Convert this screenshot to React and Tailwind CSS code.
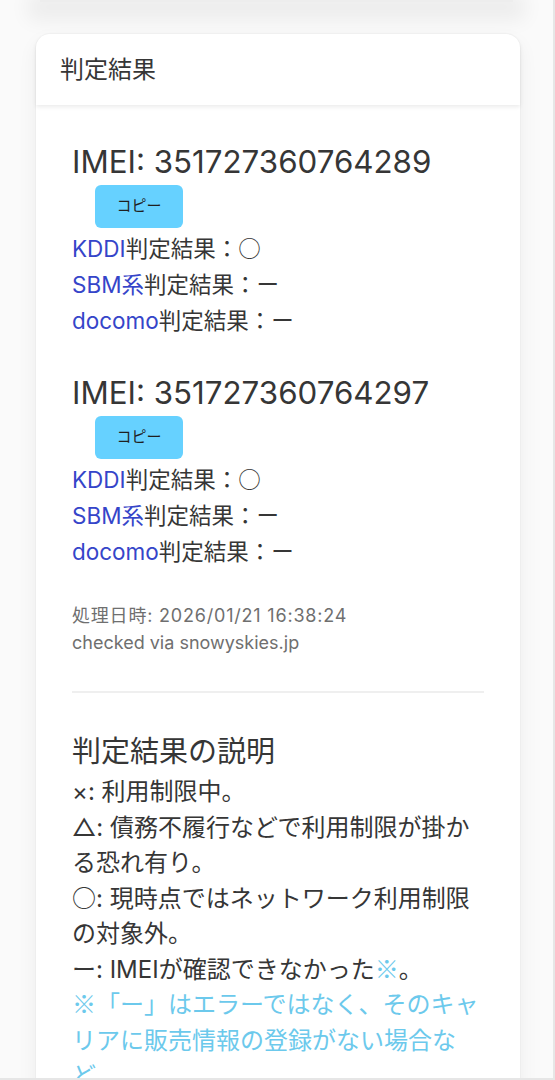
import React from 'react';

const results = [
  { imei: '351727360764289', kddi: '○', sbm: 'ー', docomo: 'ー' },
  { imei: '351727360764297', kddi: '○', sbm: 'ー', docomo: 'ー' },
];

// symbols drawn from the CJK face, kept from growing the line box
const cjk = "font-['Noto_Sans_CJK_JP',sans-serif] leading-none";

function ResultBlock({ r }) {
  return (
    <div>
      <h3 className="text-[31.3px] leading-[44px] text-[#363636]">IMEI: {r.imei}</h3>
      <button className="mt-px ml-[23px] h-[43px] w-[88px] rounded-[6px] bg-[#66d1ff] text-[15px] text-[#1f1f1f]">
        コピー
      </button>
      <div className="mt-[3px] text-[22.5px] leading-[36px] text-[#363636]">
        <p><a className="text-[#3545c9]">KDDI</a>判定結果：<span className={cjk}>{r.kddi}</span></p>
        <p><a className="text-[#3545c9]">SBM系</a>判定結果：{r.sbm}</p>
        <p><a className="text-[#3545c9]">docomo</a>判定結果：{r.docomo}</p>
      </div>
    </div>
  );
}

export default function App() {
  return (
    <div
      className="relative h-[1080px] w-[555px] overflow-hidden border-r-2 border-b-2 border-[#e6e6e6] bg-[#fafafa]"
      style={{ fontFamily: 'Inter, "Noto Sans CJK JP", sans-serif' }}
    >
      <div className="mx-[40px] h-[2px] bg-[#ededed] shadow-[0_6px_20px_12px_rgba(0,0,0,0.06)]" />

      <div className="mx-[36px] mt-[32px] w-[484px] rounded-[14px] bg-white shadow-[0_8px_20px_rgba(0,0,0,0.06),0_0_0_1px_rgba(0,0,0,0.02)]">
        <div className="flex h-[71px] items-center rounded-t-[14px] px-[24px] shadow-[0_2px_4px_rgba(0,0,0,0.08)]">
          <span className="text-[24px] text-[#363636]">判定結果</span>
        </div>

        <div className="px-[36px] pt-[35px] pb-[40px]">
          <div className="flex flex-col gap-[32px]">
            {results.map((r) => (
              <ResultBlock key={r.imei} r={r} />
            ))}
            <div className="text-[18px] leading-[27px] text-[#6f6f6f]">
              <p className="tracking-[0.8px]">処理日時: 2026/01/21 16:38:24</p>
              <p>checked via snowyskies.jp</p>
            </div>
          </div>

          <hr className="mt-[35px] border-t-2 border-[#efefef]" />

          <h3 className="mt-[38px] text-[29px] leading-[42px] text-[#363636]">判定結果の説明</h3>
          <div className="mt-px text-[24px] leading-[35.5px] text-[#363636]">
            <p>×: 利用制限中。</p>
            <p>△: 債務不履行などで利用制限が掛かる恐れ有り。</p>
            <p><span className={cjk}>○</span>: 現時点ではネットワーク利用制限の対象外。</p>
            <p>ー: IMEIが確認できなかった<span className={`${cjk} text-[#6cc9ec]`}>※</span>。</p>
            <p className="text-[#6cc9ec]">
              <span className={cjk}>※</span>「ー」はエラーではなく、そのキャリアに販売情報の登録がない場合など。
            </p>
          </div>
        </div>
      </div>
    </div>
  );
}
